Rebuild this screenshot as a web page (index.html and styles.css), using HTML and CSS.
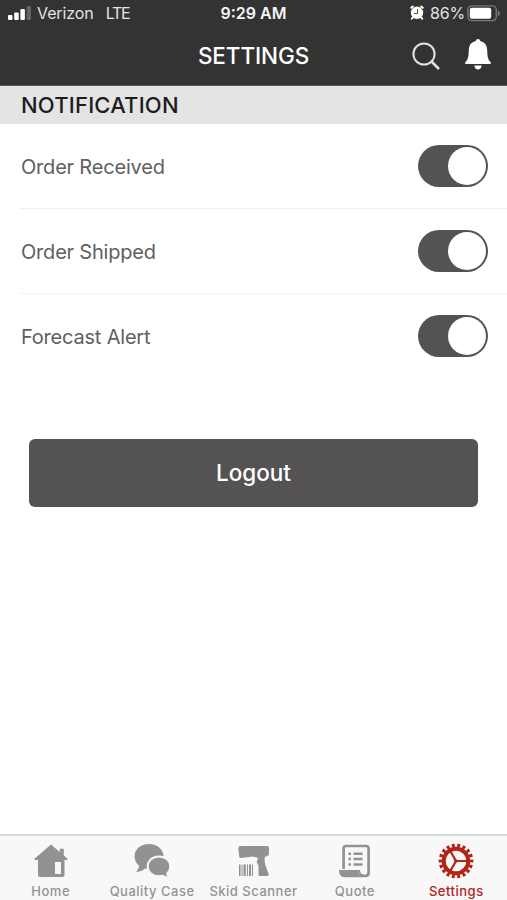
FILE: index.html
```
<!DOCTYPE html>
<html lang="en">
<head>
    <meta charset="UTF-8">
    <meta name="viewport" content="width=device-width, initial-scale=1.0">
    <title>Settings</title>
    <link rel="stylesheet" href="styles.css">
</head>
<body>
    <header class="header">
        <div class="status-bar">
            <div class="status-left">
                <svg class="signal" width="23" height="14" viewBox="0 0 23 14" fill="#fff">
                    <rect x="0" y="9" width="4.5" height="5" rx="1"/>
                    <rect x="6.2" y="6.5" width="4.5" height="7.5" rx="1"/>
                    <rect x="12.4" y="3" width="4.5" height="11" rx="1"/>
                    <rect x="18.6" y="0" width="4.4" height="14" rx="1" fill="#636363"/>
                </svg>
                <span class="carrier">Verizon</span>
                <span class="network">LTE</span>
            </div>
            <span class="time">9:29 AM</span>
            <div class="status-right">
                <svg class="alarm" width="14" height="15" viewBox="0 0 14 15">
                    <circle cx="7" cy="7.8" r="6.2" fill="#fff"/>
                    <path d="M1.3 2.8 2.8 1.5M12.7 2.8 11.2 1.500M2.700 12.500l-.8 1.100M11.300 12.500l.8 1.100" stroke="#fff" stroke-width="2" stroke-linecap="round"/>
                    <path d="M7.500 4v4.500H4" fill="none" stroke="#555" stroke-width="1"/>
                </svg>
                <span class="battery-level">86%</span>
                <svg width="33" height="17" viewBox="0 0 33 17">
                    <rect x=".9" y=".9" width="28.4" height="14.7" rx="4" fill="none" stroke="#777" stroke-width="1.4"/>
                    <rect x="2.8" y="2.8" width="21.4" height="10.9" rx="2" fill="#fff"/>
                    <path d="M30.8 5.4q2 .6 2 2.9t-2 2.9z" fill="#777"/>
                </svg>
            </div>
        </div>
        <div class="nav-bar">
            <h1>SETTINGS</h1>
            <div class="nav-actions">
                <svg width="28" height="28" viewBox="0 0 28 28" fill="none" stroke="#e2e2e2" stroke-width="2">
                    <circle cx="12" cy="12" r="10.6"/>
                    <path d="M19.5 19.5 27 27" stroke-width="2.5"/>
                </svg>
                <svg class="bell" width="26" height="31" viewBox="0 0 26 31" fill="#fff">
                    <path d="M13 0c1.3 0 2 .9 2.200 2 4.400 1 6.800 4.300 7 9 .2 6.500.6 9.500 3.300 12 .8.800.6 1.900-.6 1.900H1.100C-.1 24.900-.3 23.800.5 23c2.700-2.500 3.100-5.500 3.300-12 .2-4.700 2.600-8 7-9C11 .9 11.700 0 13 0z"/>
                    <path d="M9.300 26.500h7.400c-.3 2.500-1.800 4-3.700 4s-3.400-1.500-3.700-4z"/>
                </svg>
            </div>
        </div>
    </header>

    <main class="content">
        <h2 class="section-title">NOTIFICATION</h2>
        <ul class="settings-list">
            <li>
                <span>Order Received</span>
                <button class="toggle" role="switch" aria-checked="true" aria-label="Order Received"></button>
            </li>
            <li>
                <span>Order Shipped</span>
                <button class="toggle" role="switch" aria-checked="true" aria-label="Order Shipped"></button>
            </li>
            <li>
                <span>Forecast Alert</span>
                <button class="toggle" role="switch" aria-checked="true" aria-label="Forecast Alert"></button>
            </li>
        </ul>
        <button class="logout-button">Logout</button>
    </main>

    <nav class="tab-bar">
        <a class="tab">
            <svg width="36" height="36" viewBox="0 0 36 36" fill="#929292">
                <path fill-rule="evenodd" d="M18 1.500 26.800 9V5.800h4v6.600l3.400 3c.8.8.5 1.600-.5 1.600h-2.200v14.500c0 1.800-.8 2.500-2.500 2.500H7.500C5.800 34 5 33.300 5 31.500V17H2.300c-1 0-1.300-.8-.5-1.600zM22 19v12h6V19z"/>
            </svg>
            <span>Home</span>
        </a>
        <a class="tab">
            <svg width="36" height="36" viewBox="0 0 36 36" fill="#929292">
                <path d="M15 1C6.800 1 .5 6.400.5 13.200c0 4 2 7.400 4.600 9.400-.2 2.200-1.300 4.500-3 6.400 3.900-.2 6.600-1.300 8.700-3.400 1 .3 2.200.4 4.200.4 8 0 14.500-5.500 14.500-12.600S23 1 15 1z"/>
                <path d="M25 13.500c-6.400 0-11.300 4.300-11.300 9.900 0 5.500 4.900 9.900 11.300 9.900 1.500 0 2.800-.2 4-.5 1.600 1.400 3.500 2.200 6.100 2.300-1.100-1.300-1.800-2.800-1.900-4.500 2-1.800 3.100-4.400 3.100-7.200 0-5.600-4.900-9.900-11.300-9.900z" stroke="#f8f8f8" stroke-width="2"/>
            </svg>
            <span>Quality Case</span>
        </a>
        <a class="tab">
            <svg width="36" height="36" viewBox="0 0 36 36" fill="#929292">
                <path d="M5.500 3H32q2 0 2 2v5.500q0 2-2 2.500l-2.200 1c-.5 3.500.1 7 1.300 10.200l2.400 6.300c.5 1.500.1 2.500-1.500 2.500h-6.500c-1.500 0-2-.6-2-2V22.500l-1.800-3.200 1.400-4.300L18 13.500 6 15q-1.400 0-1.800-1.500l-.9-7.900Q3.200 3 5.500 3z"/>
                <path d="M4 21.500h1.500V33H4zM6.500 21.500h1V33h-1zM8.500 21.500h2.300V33H8.500zM12 21.500h1V33h-1zM14 21.500h2V33h-2zM17 21.500h1V33h-1z"/>
            </svg>
            <span>Skid Scanner</span>
        </a>
        <a class="tab">
            <svg width="36" height="36" viewBox="0 0 36 36" fill="none" stroke="#929292">
                <path d="M6.600 26V5.500q0-2.500 2.500-2.500h20q2.500 0 2.500 2.500v24q0 3.500-3.500 3.500H8" stroke-width="2.700"/>
                <path d="M2 27h19c0 3.500 1.200 5.500 3.500 7H7c-3 0-5-2.500-5-7z" fill="#929292" stroke="none"/>
                <path d="M22 27c.2 3.500 2 5.500 5 5.500" stroke-width="2"/>
                <path d="M11.500 10.700H14M16.500 10.700h9M11.500 16H14M16.500 16h9M11.500 21.500H14M16.500 21.500h9" stroke-width="2.400"/>
            </svg>
            <span>Quote</span>
        </a>
        <a class="tab active">
            <svg width="36" height="36" viewBox="0 0 36 36" fill="none" stroke="#b32317">
                <circle cx="18" cy="18" r="12.300" stroke-width="3.900"/>
                <!-- 18 teeth round the rim -->
                <circle cx="18" cy="18" r="15.600" pathLength="180" stroke-width="3.600" stroke-dasharray="5.400 4.600" stroke-dashoffset="2.700"/>
                <path d="M18 18h11M18 18l-5.700-10M18 18l-5.700 10" stroke-width="2.200"/>
                <circle cx="17.800" cy="18" r="1.700" fill="#b32317" stroke="none"/>
            </svg>
            <span>Settings</span>
        </a>
    </nav>
</body>
</html>
```
FILE: styles.css
```
* {
    box-sizing: border-box;
}

body {
    margin: 0;
    height: 900px;
    display: flex;
    flex-direction: column;
    font-family: Inter, "Liberation Sans", sans-serif;
    background-color: #fff;
    overflow: hidden;
}

h1, h2, ul {
    margin: 0;
    padding: 0;
}

button {
    font-family: inherit;
    border: none;
    cursor: pointer;
}

svg {
    display: block;
    flex-shrink: 0;
}

.header {
    height: 86px;
    background-color: #333;
    border-bottom: 1px solid #555;
    color: #fff;
}

.status-bar {
    height: 27px;
    padding: 0 8px;
    display: grid;
    grid-template-columns: 1fr auto 1fr;
    align-items: center;
    font-size: 16px;
    line-height: 27px;
    color: #e4e4e4;
}

.status-left, .status-right {
    display: flex;
    align-items: center;
}

.status-right {
    justify-content: flex-end;
}

.signal {
    margin: 0 6px 1px 0;
}

.carrier {
    margin-right: 12px;
    letter-spacing: -0.1px;
}

.network {
    letter-spacing: -1.2px;
}

.time {
    font-weight: 600;
    color: #f4f4f4;
}

.alarm {
    margin-bottom: 2px;
}

.battery-level {
    margin: 0 2px 0 6px;
    letter-spacing: -0.2px;
}

.battery-level + svg {
    margin-right: -1px;
}

.nav-bar {
    height: 58px;
    padding: 0 16px;
    display: grid;
    grid-template-columns: 1fr auto 1fr;
    align-items: center;
}

.nav-bar h1 {
    grid-column: 2;
    font-size: 22.5px;
    font-weight: 500;
    line-height: 28px;
    letter-spacing: -0.1px;
}

.nav-actions {
    display: flex;
    justify-content: flex-end;
    align-items: center;
    gap: 25px;
}

.bell {
    margin-bottom: 3px;
}

.content {
    flex: 1;
}

.section-title {
    height: 38px;
    padding-left: 21px;
    background-color: #e4e4e4;
    color: #1d1d1d;
    font-size: 22px;
    font-weight: 500;
    line-height: 39px;
    letter-spacing: 0.2px;
}

.settings-list {
    list-style: none;
    padding-left: 20px;
}

.settings-list li {
    height: 85px;
    padding-right: 19px;
    display: flex;
    align-items: center;
    justify-content: space-between;
    border-bottom: 1px solid #f2f2f2;
    color: #606060;
    font-size: 20px;
    letter-spacing: -0.2px;
}

.settings-list span {
    padding: 2px 0 0 1px;
}

.settings-list li:last-child {
    border-bottom-color: transparent;
}

.toggle {
    width: 70px;
    height: 42px;
    padding: 2px;
    border-radius: 21px;
    background-color: #545253;
    display: flex;
    align-items: center;
    justify-content: flex-end;
}

.toggle::after {
    content: "";
    width: 38px;
    height: 38px;
    border-radius: 50%;
    background-color: #fff;
}

.logout-button {
    display: block;
    width: 449px;
    height: 68px;
    margin: 60px 0 0 29px;
    padding-bottom: 3px;
    border-radius: 6px;
    background-color: #545253;
    color: #fff;
    font-size: 22.5px;
    font-weight: 500;
}

.tab-bar {
    height: 66px;
    display: grid;
    grid-template-columns: repeat(5, 1fr);
    border-top: 2px solid #d9d9d9;
    background-color: #f8f8f8;
}

.tab {
    display: flex;
    flex-direction: column;
    align-items: center;
    padding-top: 7px;
    color: #929292;
    font-size: 13px;
    font-weight: 500;
    line-height: 16px;
    letter-spacing: 0.5px;
    white-space: nowrap;
}

.tab span {
    margin-top: 4px;
}

.tab.active {
    color: #b32317;
}
```
